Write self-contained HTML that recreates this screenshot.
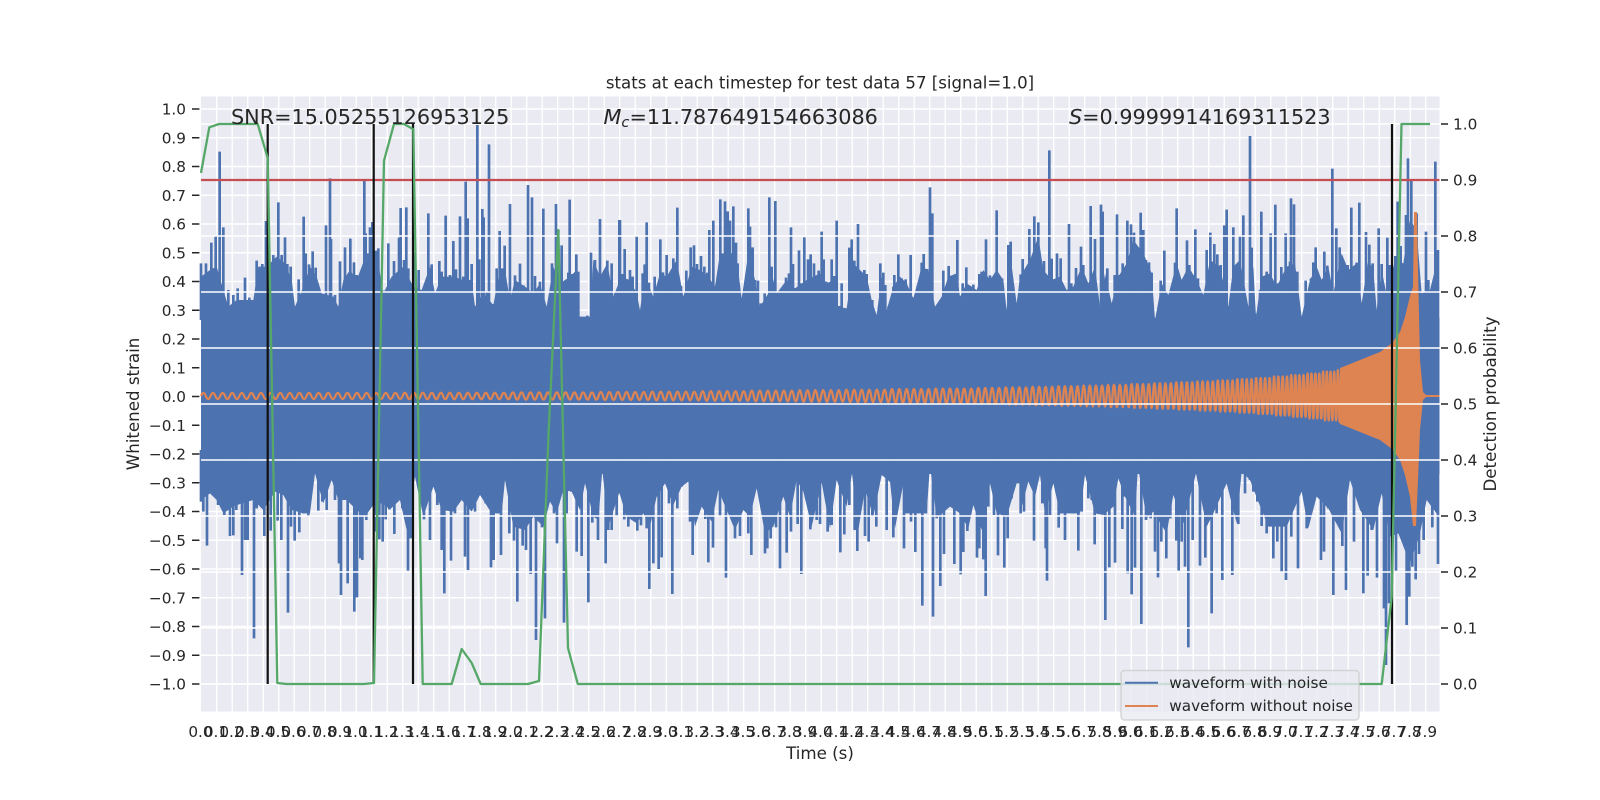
<!DOCTYPE html>
<html><head><meta charset="utf-8"><title>stats at each timestep for test data 57</title>
<style>html,body{margin:0;padding:0;background:#fff}svg{display:block}text{font-family:"DejaVu Sans","Liberation Sans",sans-serif;fill:#262626}</style></head>
<body>
<svg width="1600" height="800" viewBox="0 0 1600 800" xmlns="http://www.w3.org/2000/svg">
<rect width="1600" height="800" fill="#fff"/>
<rect x="201" y="96.5" width="1238.5" height="615" fill="#eaeaf2"/>
<!-- vertical grid -->
<path fill="none" stroke="#fff" stroke-width="1.4" d="M216.7 96.5v615m15.5-615v615m15.5-615v615m15.5-615v615m15.5-615v615m15.5-615v615m15.5-615v615m15.5-615v615m15.5-615v615m15.5-615v615m15.5-615v615m15.5-615v615m15.5-615v615m15.5-615v615m15.5-615v615m15.5-615v615m15.5-615v615m15.5-615v615m15.5-615v615m15.5-615v615m15.5-615v615m15.5-615v615m15.5-615v615m15.5-615v615m15.5-615v615m15.5-615v615m15.5-615v615m15.5-615v615m15.5-615v615m15.5-615v615m15.5-615v615m15.5-615v615m15.5-615v615m15.5-615v615m15.5-615v615m15.5-615v615m15.5-615v615m15.5-615v615m15.5-615v615m15.5-615v615m15.5-615v615m15.5-615v615m15.5-615v615m15.5-615v615m15.5-615v615m15.5-615v615m15.5-615v615m15.5-615v615m15.5-615v615m15.5-615v615m15.5-615v615m15.5-615v615m15.5-615v615m15.5-615v615m15.5-615v615m15.5-615v615m15.5-615v615m15.5-615v615m15.5-615v615m15.5-615v615m15.5-615v615m15.5-615v615m15.5-615v615m15.5-615v615m15.5-615v615m15.5-615v615m15.5-615v615m15.5-615v615m15.5-615v615m15.5-615v615m15.5-615v615m15.5-615v615m15.5-615v615m15.5-615v615m15.5-615v615m15.5-615v615m15.5-615v615m15.5-615v615m15.5-615v615m15.5-615v615"/>
<!-- left horizontal grid -->
<path fill="none" stroke="#fff" stroke-width="1.4" d="M201 109h1238.5M201 137.75h1238.5M201 166.5h1238.5M201 195.25h1238.5M201 224h1238.5M201 252.75h1238.5M201 281.5h1238.5M201 310.25h1238.5M201 339h1238.5M201 367.75h1238.5M201 396.5h1238.5M201 425.25h1238.5M201 454h1238.5M201 482.75h1238.5M201 511.5h1238.5M201 540.25h1238.5M201 569h1238.5M201 597.75h1238.5M201 626.5h1238.5M201 655.25h1238.5M201 684h1238.5"/>
<!-- noisy waveform: solid core -->
<rect x="201" y="318" width="1238.5" height="156" fill="#4c72b0"/>
<!-- noisy waveform: lumps -->
<g fill="#4c72b0">
<polygon transform="translate(200,120) scale(.33333)" points="3,600 3,470 30,450 50,440 70,510 85,560 110,540 130,540 160,540 175,440 200,440 230,410 255,430 275,480 285,560 310,500 330,440 350,470 365,520 400,530 415,560 430,480 450,450 470,480 500,400 530,400 550,520 575,470 610,440 640,500 665,510 690,440 705,520 725,470 760,470 790,480 815,480 825,560 850,520 880,555 900,450 915,450 930,540 945,480 975,500 1000,520 1020,490 1040,560 1060,440 1080,490 1110,470 1130,450 1138,590 1170,590 1180,420 1200,470 1222,430 1240,530 1260,480 1260,600"/>
<polygon transform="translate(620,120) scale(.33333)" points="0,600 0,470 30,480 50,520 60,570 75,470 100,530 120,460 140,470 170,420 190,530 215,440 240,450 265,470 285,500 300,400 340,400 352,430 365,535 385,400 405,480 420,560 445,520 455,460 470,520 500,480 525,505 560,480 600,460 620,490 640,480 655,560 680,565 700,430 740,470 755,540 770,585 785,470 800,570 820,500 840,470 860,490 880,535 905,440 925,450 945,560 965,530 985,470 1010,460 1020,530 1040,490 1070,510 1090,450 1110,480 1130,450 1150,480 1160,570 1170,400 1190,550 1200,470 1200,600"/>
<polygon transform="translate(1020,120) scale(.33333)" points="0,600 0,470 30,420 55,350 70,450 95,480 120,470 140,510 160,500 185,440 205,490 225,440 240,560 255,460 275,550 295,470 320,430 340,360 370,400 395,460 405,600 425,490 445,525 470,430 485,480 505,440 530,480 550,525 570,420 600,440 625,560 640,440 660,420 685,560 700,440 708,590 725,470 750,460 770,500 800,440 825,430 845,590 870,480 890,440 905,480 925,440 940,520 965,400 985,450 1010,430 1025,550 1045,420 1060,450 1070,570 1085,450 1100,525 1125,420 1150,430 1170,300 1190,330 1205,520 1230,510 1257,400 1257,600"/>
<polygon transform="translate(200,450) scale(.33333)" points="3,0 3,150 30,130 50,150 70,190 100,170 125,160 160,150 190,180 225,125 250,135 275,180 310,190 330,190 345,70 370,160 395,90 415,150 440,150 470,180 495,200 520,165 545,160 570,178 600,150 620,240 645,80 670,200 700,110 725,180 760,185 785,150 815,185 840,135 875,190 905,190 915,90 940,230 975,240 1000,200 1030,230 1050,155 1070,190 1090,120 1115,125 1140,180 1155,100 1180,200 1195,210 1207,60 1225,230 1257,130 1257,0"/>
<polygon transform="translate(620,450) scale(.33333)" points="0,0 0,135 20,200 50,220 70,190 90,230 110,140 135,100 160,165 185,110 205,95 225,230 245,170 275,215 295,120 320,180 345,240 370,180 390,200 410,115 435,250 460,230 490,140 510,200 530,90 550,125 575,230 605,98 630,235 650,90 680,170 696,70 715,240 735,118 760,200 785,75 810,95 825,235 850,100 860,190 885,190 920,190 930,45 950,205 990,170 1020,190 1045,235 1060,165 1085,240 1110,100 1130,190 1160,200 1190,100 1200,100 1200,0"/>
<polygon transform="translate(1020,450) scale(.33333)" points="0,0 0,190 25,95 45,140 60,75 75,190 100,100 120,190 150,190 180,190 195,75 225,190 250,195 280,170 295,85 315,140 345,200 354,50 380,205 400,185 440,250 460,135 490,220 528,70 560,230 580,190 620,100 650,220 665,65 690,90 715,155 745,230 770,230 800,230 845,125 865,235 890,140 925,175 965,250 990,90 1020,180 1060,240 1085,130 1110,260 1135,250 1170,340 1200,250 1220,150 1257,200 1257,0"/>
</g>
<!-- noisy waveform: spikes -->
<g fill="none" stroke="#4c72b0" stroke-width="8">
<path transform="translate(200,120) scale(.33333)" d="M3 430V600M10 467V600M18 430V600M24 545V600M34 368V600M40 445V600M47 348V600M59 95V600M65 495V600M70 322V600M85 510V600M100 525V600M113 505V600M135 473V600M148 533V600M170 422V600M187 432V600M198 303V600M205 370V600M220 405V600M235 247V600M245 405V600M255 352V600M262 432V600M272 440V600M278 540V600M296 478V600M311 290V600M317 400V600M327 433V600M338 394V600M347 443V600M357 505V600M378 316V600M390 175V600M393 357V600M405 525V600M420 424V600M435 382V600M445 560V600M451 356V600M462 427V600M470 465V600M493 182V600M497 340V600M510 322V600M517 306V600M527 392V600M535 385V600M551 512V600M565 370V600M575 475V600M582 423V600M602 264V600M597 353V600M612 420V600M619 262V600M625 445V600M640 400V600M656 450V600M672 505V600M685 280V600M695 433V600M706 522V600M718 423V600M725 455V600M737 287V600M750 465V600M760 363V600M768 448V600M780 289V600M790 470V600M797 185V600M803 295V600M815 432V600M822 558V600M832 15V600M838 418V600M847 267V600M851 292V600M860 515V600M867 73V600M880 552V600M890 445V600M899 333V600M907 445V600M914 377V600M922 540V600M930 252V600M945 466V600M960 431V600M970 496V600M984 195V600M990 565V600M996 232V600M1005 468V600M1020 485V600M1030 266V600M1040 570V600M1056 430V600M1068 252V600M1075 330V600M1085 376V600M1095 488V600M1105 458V600M1109 239V600M1115 462V600M1129 403V600M1135 455V600M1145 592V600M1162 587V600M1173 398V600M1185 420V600M1200 297V600M1210 530V600M1222 422V600M1235 430V600M1245 520V600M1258 300V600"/>
<path transform="translate(620,120) scale(.33333)" d="M0 300V600M8 462V600M14 387V600M24 480V600M30 450V600M38 470V600M50 347V600M58 570V600M68 460V600M74 433V600M80 307V600M87 488V600M95 528V600M104 470V600M112 530V600M121 358V600M129 457V600M140 405V600M150 476V600M160 415V600M172 263V600M183 498V600M192 530V600M199 452V600M212 382V600M222 376V600M231 432V600M243 408V600M253 440V600M262 458V600M268 330V600M280 302V600M290 492V600M301 238V600M315 244V600M323 274V600M330 302V600M340 259V600M348 368V600M353 430V600M368 535V600M385 265V600M390 320V600M398 382V600M405 480V600M414 482V600M423 550V600M434 520V600M448 232V600M455 440V600M466 243V600M473 520V600M484 528V600M498 473V600M507 460V600M513 322V600M519 432V600M527 505V600M537 391V600M543 490V600M553 352V600M564 418V600M572 403V600M582 430V600M596 452V600M605 335V600M611 418V600M619 485V600M628 495V600M635 418V600M642 468V600M650 302V600M658 558V600M665 490V600M681 567V600M688 383V600M695 358V600M703 422V600M714 312V600M723 465V600M733 450V600M740 462V600M757 540V600M772 585V600M781 430V600M790 458V600M796 495V600M806 558V600M820 500V600M823 465V600M835 403V600M845 475V600M857 478V600M872 405V600M880 533V600M889 532V600M897 550V600M905 428V600M911 402V600M921 447V600M930 202V600M937 280V600M949 560V600M961 543V600M970 452V600M986 438V600M1000 478V600M1012 360V600M1019 560V600M1028 490V600M1039 442V600M1048 508V600M1060 494V600M1070 515V600M1078 462V600M1085 455V600M1098 358V600M1110 466V600M1120 530V600M1130 271V600M1146 475V600M1160 580V600M1165 375V600M1172 365V600M1188 552V600"/>
<path transform="translate(1020,120) scale(.33333)" d="M2 463V600M8 417V600M20 485V600M28 327V600M35 500V600M43 289V600M55 307V600M60 490V600M72 423V600M80 505V600M88 91V600M95 416V600M104 477V600M111 400V600M122 415V600M130 520V600M147 312V600M154 490V600M168 444V600M175 540V600M183 380V600M190 435V600M200 487V600M212 258V600M225 357V600M232 565V600M243 254V600M248 275V600M262 445V600M275 550V600M284 465V600M291 283V600M298 465V600M308 430V600M322 302V600M333 313V600M342 338V600M352 425V600M362 278V600M370 330V600M378 420V600M387 427V600M395 458V600M422 482V600M433 392V600M450 522V600M465 428V600M470 265V600M480 575V600M490 476V600M501 361V600M508 435V600M526 328V600M534 475V600M547 525V600M560 390V600M571 338V600M583 372V600M592 403V600M602 435V600M613 316V600M620 269V600M630 555V600M640 322V600M652 445V600M660 350V600M670 286V600M680 560V600M690 48V600M695 383V600M705 580V600M720 510V600M724 275V600M740 455V600M752 340V600M766 254V600M773 490V600M784 441V600M797 340V600M810 425V600M813 235V600M822 253V600M832 455V600M850 585V600M857 482V600M873 475V600M880 427V600M887 382V600M903 478V600M913 395V600M922 437V600M937 146V600M949 325V600M959 382V600M972 472V600M983 435V600M994 263V600M1010 428V600M1018 248V600M1028 555V600M1038 336V600M1048 374V600M1058 430V600M1068 570V600M1076 325V600M1085 432V600M1095 525V600M1102 353V600M1110 435V600M1126 408V600M1133 245V600M1142 378V600M1152 432V600M1158 285V600M1164 115V600M1174 183V600M1190 280V600M1205 525V600M1218 335V600M1225 480V600M1233 520V600M1246 125V600M1254 390V600"/>
<path transform="translate(200,450) scale(.33333)" d="M3 155V0M10 185V0M21 287V0M30 130V0M38 100V0M45 100V0M54 165V0M62 150V0M73 195V0M82 100V0M90 258V0M100 256V0M109 180V0M117 90V0M126 375V0M135 270V0M143 270V0M152 135V0M162 565V0M170 175V0M178 120V0M193 258V0M212 242V0M222 125V0M233 212V0M244 270V0M255 85V0M264 488V0M273 230V0M284 272V0M298 247V0M310 190V0M325 200V0M340 70V0M355 182V0M367 155V0M380 180V0M395 90V0M405 150V0M417 340V0M423 435V0M432 150V0M443 400V0M452 150V0M463 485V0M471 442V0M481 325V0M487 330V0M499 210V0M511 165V0M528 245V0M538 268V0M548 275V0M557 208V0M568 178V0M583 252V0M595 135V0M607 175V0M624 362V0M632 265V0M645 80V0M660 160V0M672 208V0M690 270V0M700 110V0M712 165V0M725 300V0M733 430V0M743 145V0M753 332V0M765 190V0M772 100V0M795 320V0M804 360V0M812 175V0M825 185V0M840 135V0M857 160V0M873 352V0M881 330V0M892 190V0M903 315V0M912 90V0M928 250V0M942 272V0M952 455V0M960 190V0M968 287V0M978 300V0M992 372V0M1008 570V0M1015 205V0M1026 232V0M1035 505V0M1052 155V0M1062 190V0M1071 280V0M1084 110V0M1092 518V0M1100 190V0M1115 125V0M1130 305V0M1145 318V0M1155 100V0M1165 457V0M1177 218V0M1194 270V0M1205 60V0M1217 340V0M1225 240V0M1235 240V0M1250 200V0M1257 130V0"/>
<path transform="translate(620,450) scale(.33333)" d="M3 135V0M13 208V0M25 230V0M38 160V0M52 242V0M63 226V0M72 180V0M80 235V0M88 417V0M100 340V0M108 140V0M116 357V0M125 322V0M133 100V0M147 160V0M157 432V0M172 175V0M185 110V0M200 95V0M210 215V0M218 315V0M232 140V0M245 165V0M256 207V0M265 337V0M279 293V0M290 115V0M300 200V0M318 383V0M330 175V0M345 265V0M360 258V0M372 180V0M385 250V0M394 315V0M405 115V0M423 153V0M435 310V0M442 295V0M452 265V0M468 232V0M480 355V0M490 140V0M500 308V0M513 245V0M522 90V0M533 222V0M544 372V0M556 125V0M571 238V0M580 95V0M590 210V0M600 222V0M607 98V0M623 245V0M635 225V0M650 90V0M661 307V0M673 253V0M688 165V0M696 70V0M704 240V0M712 303V0M722 118V0M735 258V0M746 275V0M757 200V0M769 230V0M785 75V0M800 240V0M810 95V0M820 262V0M835 100V0M852 295V0M860 190V0M873 215V0M886 306V0M895 175V0M907 467V0M918 190V0M925 45V0M939 500V0M950 205V0M961 408V0M972 312V0M985 165V0M1003 342V0M1013 125V0M1022 373V0M1030 306V0M1042 243V0M1055 165V0M1071 323V0M1078 295V0M1090 328V0M1097 438V0M1105 170V0M1112 65V0M1122 195V0M1134 316V0M1143 190V0M1153 353V0M1163 265V0M1175 145V0M1190 95V0"/>
<path transform="translate(1020,450) scale(.33333)" d="M2 190V0M12 185V0M25 95V0M42 272V0M55 75V0M67 160V0M77 295V0M81 392V0M90 195V0M102 100V0M116 233V0M125 190V0M135 270V0M150 190V0M160 190V0M175 302V0M185 185V0M195 75V0M205 145V0M215 150V0M224 283V0M235 190V0M245 190V0M256 510V0M268 352V0M277 170V0M285 338V0M295 85V0M307 237V0M315 140V0M323 370V0M335 433V0M345 353V0M354 50V0M364 522V0M378 210V0M392 205V0M405 305V0M414 382V0M424 275V0M439 325V0M451 205V0M460 135V0M469 272V0M476 362V0M485 275V0M495 350V0M505 592V0M518 270V0M528 70V0M540 347V0M556 323V0M565 148V0M575 490V0M590 190V0M607 390V0M620 100V0M637 375V0M655 222V0M665 65V0M675 130V0M690 90V0M700 125V0M712 155V0M725 228V0M740 250V0M760 325V0M772 275V0M785 365V0M798 390V0M814 260V0M834 355V0M845 125V0M860 235V0M870 145V0M880 140V0M903 330V0M912 305V0M925 175V0M940 435V0M955 220V0M967 288V0M978 420V0M990 90V0M1002 275V0M1015 100V0M1030 430V0M1043 377V0M1055 240V0M1071 383V0M1083 130V0M1092 475V0M1098 645V0M1107 460V0M1128 362V0M1143 255V0M1160 525V0M1168 440V0M1177 350V0M1187 388V0M1197 312V0M1211 270V0M1220 150V0M1237 232V0M1254 342V0"/>
</g>
<!-- clean waveform -->
<g fill="none" stroke="#dd8452" stroke-width="2.3">
<path d="M201 396q2.4 -6 4.8 0t4.8 0t4.8 0t4.8 0t4.8 0t4.8 0t4.8 0t4.8 0t4.8 0t4.8 0t4.8 0t4.8 0t4.8 0t4.8 0t4.8 0t4.8 0t4.8 0t4.8 0t4.8 0t4.8 0t4.8 0t4.8 0t4.8 0t4.8 0t4.8 0t4.8 0t4.8 0t4.8 0t4.8 0t4.8 0t4.8 0t4.8 0t4.8 0t4.8 0t4.8 0t4.8 0t4.8 0t4.8 0t4.8 0t4.8 0t4.8 0t4.8 0
q2.25 -6.4 4.5 0t4.5 0t4.5 0t4.5 0t4.5 0t4.5 0t4.5 0t4.5 0t4.5 0t4.5 0t4.5 0t4.5 0t4.5 0t4.5 0t4.5 0t4.5 0t4.5 0t4.5 0t4.5 0t4.5 0t4.5 0t4.5 0t4.5 0t4.5 0
q2.2 -7.2 4.4 0t4.4 0t4.4 0t4.4 0t4.4 0t4.4 0t4.4 0t4.4 0t4.4 0t4.4 0t4.4 0t4.4 0t4.4 0t4.4 0t4.4 0t4.4 0t4.4 0t4.4 0t4.4 0t4.4 0
q2.15 -8 4.3 0t4.3 0t4.3 0t4.3 0t4.3 0t4.3 0t4.3 0t4.3 0t4.3 0t4.3 0t4.3 0t4.3 0
q2.1 -8.8 4.2 0t4.2 0t4.2 0t4.2 0t4.2 0t4.2 0t4.2 0t4.2 0t4.2 0t4.2 0t4.2 0t4.2 0
q2.05 -9.6 4.1 0t4.1 0t4.1 0t4.1 0t4.1 0t4.1 0t4.1 0t4.1 0t4.1 0t4.1 0t4.1 0t4.1 0
q2 -10.6 4 0t4 0t4 0t4 0t4 0t4 0t4 0t4 0t4 0t4 0t4 0t4 0
q1.95 -11.6 3.9 0t3.9 0t3.9 0t3.9 0t3.9 0t3.9 0t3.9 0t3.9 0t3.9 0t3.9 0t3.9 0t3.9 0
q1.9 -12.6 3.8 0t3.8 0t3.8 0t3.8 0t3.8 0t3.8 0t3.8 0t3.8 0t3.8 0t3.8 0t3.8 0t3.8 0
q1.83 -13.6 3.65 0t3.65 0t3.65 0t3.65 0t3.65 0t3.65 0t3.65 0t3.65 0t3.65 0t3.65 0t3.65 0t3.65 0
q1.78 -14.8 3.55 0t3.55 0t3.55 0t3.55 0t3.55 0t3.55 0t3.55 0t3.55 0t3.55 0t3.55 0t3.55 0t3.55 0
q1.73 -16 3.45 0t3.45 0t3.45 0t3.45 0t3.45 0t3.45 0t3.45 0t3.45 0
q1.68 -17.2 3.35 0t3.35 0t3.35 0t3.35 0t3.35 0t3.35 0t3.35 0t3.35 0
q1.63 -18.4 3.25 0t3.25 0t3.25 0t3.25 0t3.25 0t3.25 0t3.25 0t3.25 0
q1.58 -19.6 3.15 0t3.15 0t3.15 0t3.15 0t3.15 0t3.15 0t3.15 0t3.15 0
q1.53 -21 3.05 0t3.05 0t3.05 0t3.05 0t3.05 0t3.05 0t3.05 0t3.05 0
q1.48 -22.4 2.95 0t2.95 0t2.95 0t2.95 0t2.95 0t2.95 0t2.95 0t2.95 0
q1.43 -24 2.85 0t2.85 0t2.85 0t2.85 0t2.85 0t2.85 0t2.85 0t2.85 0
q1.38 -25.6 2.75 0t2.75 0t2.75 0t2.75 0t2.75 0t2.75 0t2.75 0t2.75 0
q1.33 -27.4 2.65 0t2.65 0t2.65 0t2.65 0t2.65 0t2.65 0t2.65 0t2.65 0
q1.28 -29.2 2.55 0t2.55 0t2.55 0t2.55 0t2.55 0t2.55 0t2.55 0t2.55 0
q1.23 -31.2 2.45 0t2.45 0t2.45 0t2.45 0t2.45 0t2.45 0t2.45 0t2.45 0
q1.18 -33.6 2.35 0t2.35 0t2.35 0t2.35 0t2.35 0t2.35 0t2.35 0t2.35 0
q1.13 -36 2.25 0t2.25 0t2.25 0t2.25 0t2.25 0t2.25 0t2.25 0t2.25 0
q1.08 -39 2.15 0t2.15 0t2.15 0t2.15 0t2.15 0t2.15 0t2.15 0t2.15 0
q1.03 -42 2.05 0t2.05 0t2.05 0t2.05 0t2.05 0t2.05 0t2.05 0t2.05 0
q.98 -45 1.95 0t1.95 0t1.95 0t1.95 0t1.95 0t1.95 0t1.95 0t1.95 0
q.93 -49 1.85 0t1.85 0t1.85 0t1.85 0t1.85 0t1.85 0t1.85 0t1.85 0
q.88 -52 1.75 0t1.75 0t1.75 0t1.75 0t1.75 0t1.75 0t1.75 0t1.75 0"/>
</g>
<polygon fill="#dd8452" points="1340,368 1360,360 1380,352 1392,343 1400,332 1405,317 1410,296 1413,287 1414,212 1417,212 1418,270 1420,360 1423,392 1426,395 1439.5,395 1439.5,397 1426,397 1423,400 1420,430 1418,480 1416,526 1413,526 1410,497 1405,475 1400,460 1392,449 1380,440 1360,432 1340,424"/>
<!-- right-axis grid, over data -->
<path fill="none" stroke="#fff" stroke-width="1.4" d="M201 124h1238.5M201 180h1238.5M201 236h1238.5M201 292h1238.5M201 348h1238.5M201 404h1238.5M201 460h1238.5M201 516h1238.5M201 572h1238.5M201 628h1238.5M201 684h1238.5"/>
<path d="M201 180H1439.5" stroke="#c44e52" stroke-width="2.2" fill="none"/>
<path d="M267.7 124V684M373.7 124V684M413 124V684M1392 124V684" stroke="#111" stroke-width="2.2" fill="none"/>
<polyline fill="none" stroke="#55a868" stroke-width="2.3" stroke-linejoin="round" points="201,173 209.3,127.3 219,124 257.7,124 267.7,158 277.3,683 286.7,684 364,684 374,683 384,160.7 394,124 404,124 413.3,129.3 422.7,684 451.7,684 461.7,649 471.7,663 480.7,684 528,684 539,681 548.7,430 558.3,230 568,648 577.8,684 1381.7,684 1391.7,597 1401.5,124 1430,124"/>
<!-- overlay texts -->
<text x="231" y="124" font-size="20.76">SNR=15.05255126953125</text>
<text x="603.5" y="124" font-size="20.76"><tspan font-style="italic">M</tspan><tspan font-style="italic" font-size="14.6" dy="3">c</tspan><tspan dy="-3">=11.787649154663086</tspan></text>
<text x="1069" y="124" font-size="20.76"><tspan font-style="italic">S</tspan>=0.9999914169311523</text>
<text x="820" y="88.5" font-size="16.6" text-anchor="middle">stats at each timestep for test data 57 [signal=1.0]</text>
<text x="820" y="759" font-size="16.67" text-anchor="middle">Time (s)</text>
<text transform="translate(139,404) rotate(-90)" font-size="16.67" text-anchor="middle">Whitened strain</text>
<text transform="translate(1496,404) rotate(-90)" font-size="16.67" text-anchor="middle">Detection probability</text>
<!-- ticks -->
<path stroke="#262626" stroke-width="1.6" fill="none" d="M192 109h7.4M192 137.75h7.4M192 166.5h7.4M192 195.25h7.4M192 224h7.4M192 252.75h7.4M192 281.5h7.4M192 310.25h7.4M192 339h7.4M192 367.75h7.4M192 396.5h7.4M192 425.25h7.4M192 454h7.4M192 482.75h7.4M192 511.5h7.4M192 540.25h7.4M192 569h7.4M192 597.75h7.4M192 626.5h7.4M192 655.25h7.4M192 684h7.4M1441 124h7M1441 180h7M1441 236h7M1441 292h7M1441 348h7M1441 404h7M1441 460h7M1441 516h7M1441 572h7M1441 628h7M1441 684h7"/>
<g font-size="15.28" text-anchor="end">
<text x="186" y="114.5">1.0</text><text x="186" y="143.25">0.9</text><text x="186" y="172">0.8</text><text x="186" y="200.75">0.7</text><text x="186" y="229.5">0.6</text><text x="186" y="258.25">0.5</text><text x="186" y="287">0.4</text><text x="186" y="315.75">0.3</text><text x="186" y="344.5">0.2</text><text x="186" y="373.25">0.1</text><text x="186" y="402">0.0</text><text x="186" y="430.75">−0.1</text><text x="186" y="459.5">−0.2</text><text x="186" y="488.25">−0.3</text><text x="186" y="517">−0.4</text><text x="186" y="545.75">−0.5</text><text x="186" y="574.5">−0.6</text><text x="186" y="603.25">−0.7</text><text x="186" y="632">−0.8</text><text x="186" y="660.75">−0.9</text><text x="186" y="689.5">−1.0</text>
</g>
<g font-size="15.28">
<text x="1453" y="129.5">1.0</text><text x="1453" y="185.5">0.9</text><text x="1453" y="241.5">0.8</text><text x="1453" y="297.5">0.7</text><text x="1453" y="353.5">0.6</text><text x="1453" y="409.5">0.5</text><text x="1453" y="465.5">0.4</text><text x="1453" y="521.5">0.3</text><text x="1453" y="577.5">0.2</text><text x="1453" y="633.5">0.1</text><text x="1453" y="689.5">0.0</text>
</g>
<g font-size="15.28" text-anchor="middle" transform="translate(-.7,0)">
<text x="201.2" y="737">0.0</text><text x="216.7" y="737">0.1</text><text x="232.2" y="737">0.2</text><text x="247.7" y="737">0.3</text><text x="263.2" y="737">0.4</text><text x="278.7" y="737">0.5</text><text x="294.2" y="737">0.6</text><text x="309.7" y="737">0.7</text><text x="325.2" y="737">0.8</text><text x="340.7" y="737">0.9</text>
<text x="356.2" y="737">1.0</text><text x="371.7" y="737">1.1</text><text x="387.2" y="737">1.2</text><text x="402.7" y="737">1.3</text><text x="418.2" y="737">1.4</text><text x="433.7" y="737">1.5</text><text x="449.2" y="737">1.6</text><text x="464.7" y="737">1.7</text><text x="480.2" y="737">1.8</text><text x="495.7" y="737">1.9</text>
<text x="511.2" y="737">2.0</text><text x="526.7" y="737">2.1</text><text x="542.2" y="737">2.2</text><text x="557.7" y="737">2.3</text><text x="573.2" y="737">2.4</text><text x="588.7" y="737">2.5</text><text x="604.2" y="737">2.6</text><text x="619.7" y="737">2.7</text><text x="635.2" y="737">2.8</text><text x="650.7" y="737">2.9</text>
<text x="666.2" y="737">3.0</text><text x="681.7" y="737">3.1</text><text x="697.2" y="737">3.2</text><text x="712.7" y="737">3.3</text><text x="728.2" y="737">3.4</text><text x="743.7" y="737">3.5</text><text x="759.2" y="737">3.6</text><text x="774.7" y="737">3.7</text><text x="790.2" y="737">3.8</text><text x="805.7" y="737">3.9</text>
<text x="821.2" y="737">4.0</text><text x="836.7" y="737">4.1</text><text x="852.2" y="737">4.2</text><text x="867.7" y="737">4.3</text><text x="883.2" y="737">4.4</text><text x="898.7" y="737">4.5</text><text x="914.2" y="737">4.6</text><text x="929.7" y="737">4.7</text><text x="945.2" y="737">4.8</text><text x="960.7" y="737">4.9</text>
<text x="976.2" y="737">5.0</text><text x="991.7" y="737">5.1</text><text x="1007.2" y="737">5.2</text><text x="1022.7" y="737">5.3</text><text x="1038.2" y="737">5.4</text><text x="1053.7" y="737">5.5</text><text x="1069.2" y="737">5.6</text><text x="1084.7" y="737">5.7</text><text x="1100.2" y="737">5.8</text><text x="1115.7" y="737">5.9</text>
<text x="1131.2" y="737">6.0</text><text x="1146.7" y="737">6.1</text><text x="1162.2" y="737">6.2</text><text x="1177.7" y="737">6.3</text><text x="1193.2" y="737">6.4</text><text x="1208.7" y="737">6.5</text><text x="1224.2" y="737">6.6</text><text x="1239.7" y="737">6.7</text><text x="1255.2" y="737">6.8</text><text x="1270.7" y="737">6.9</text>
<text x="1286.2" y="737">7.0</text><text x="1301.7" y="737">7.1</text><text x="1317.2" y="737">7.2</text><text x="1332.7" y="737">7.3</text><text x="1348.2" y="737">7.4</text><text x="1363.7" y="737">7.5</text><text x="1379.2" y="737">7.6</text><text x="1394.7" y="737">7.7</text><text x="1410.2" y="737">7.8</text><text x="1425.7" y="737">7.9</text>
</g>
<!-- legend -->
<rect x="1121" y="670.5" width="238" height="49.5" rx="3.5" fill="#eaeaf2" fill-opacity=".8" stroke="#ccc" stroke-opacity=".8" stroke-width="1.4"/>
<path d="M1125 682.7h33" stroke="#4c72b0" stroke-width="2" fill="none"/>
<path d="M1125 706h33" stroke="#dd8452" stroke-width="2" fill="none"/>
<text x="1169.3" y="688" font-size="15.28">waveform with noise</text>
<text x="1169.3" y="711" font-size="15.28">waveform without noise</text>
</svg>
</body></html>
